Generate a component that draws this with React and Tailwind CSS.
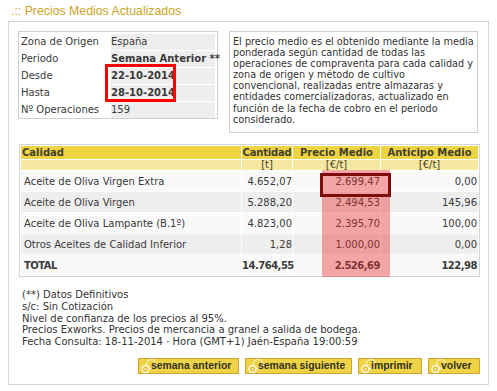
import React from "react";

const info = [
  ["Zona de Origen", "España", false],
  ["Periodo", "Semana Anterior **", true],
  ["Desde", "22-10-2014", true],
  ["Hasta", "28-10-2014", true],
  ["Nº Operaciones", "159", false],
];

const rows = [
  ["Aceite de Oliva Virgen Extra", "4.652,07", "2.699,47", "0,00"],
  ["Aceite de Oliva Virgen", "5.288,20", "2.494,53", "145,96"],
  ["Aceite de Oliva Lampante (B.1º)", "4.823,00", "2.395,70", "100,00"],
  ["Otros Aceites de Calidad Inferior", "1,28", "1.000,00", "0,00"],
];

const desc = [
  "El precio medio es el obtenido mediante la media",
  "ponderada según cantidad de todas las",
  "operaciones de compraventa para cada calidad y",
  "zona de origen y método de cultivo",
  "convencional, realizadas entre almazaras y",
  "entidades comercializadoras, actualizado en",
  "función de la fecha de cobro en el periodo",
  "considerado.",
];

function Btn({ label, w }) {
  return (
    <div
      className={`relative h-[16px] ${w} border border-[#cfa432] bg-[#efd346] flex items-center`}
    >
      <svg className="absolute left-0 top-0" width="20" height="16" viewBox="0 0 20 16">
        <circle cx="12" cy="5" r="4.5" fill="none" stroke="rgba(255,255,255,0.55)" strokeWidth="1.4" />
        <circle cx="6.5" cy="10" r="3.5" fill="#e6c53a" stroke="rgba(255,255,255,0.9)" strokeWidth="1.4" />
        <circle cx="6.5" cy="10" r="1.2" fill="rgba(255,255,255,0.6)" />
      </svg>
      <span className="relative pl-[12px] text-[10.4px] font-bold font-['Liberation_Sans',sans-serif] text-[#33321f] leading-[14px] whitespace-nowrap">
        {label}
      </span>
    </div>
  );
}

export default function App() {
  return (
    <div className="relative w-[497px] h-[391px] bg-white overflow-hidden font-['DejaVu_Sans',sans-serif] text-[10px] text-[#3a3a3a]">
      <div className="h-[21px] pl-[11px] pt-[4px] leading-[14px] text-[12.3px] text-[#c9a328] font-['Liberation_Sans',sans-serif]">
        .:: Precios Medios Actualizados
      </div>
      <div className="ml-[8px] w-[481px] h-[364px] border border-[#d6d6d6] pl-[9px] pt-[9px]">
        <div className="flex items-start gap-[11px]">
          <div className="w-[200px] border border-[#d0d0d0] pl-[2px] pt-[2px]">
            <div className="grid grid-cols-[89px_104px] gap-x-[1px] gap-y-[1px]">
              {info.map(([l, v, b]) => (
                <React.Fragment key={l}>
                  <div className="h-[16px] leading-[16px] whitespace-nowrap">{l}</div>
                  <div
                    className={`h-[16px] leading-[16px] bg-[#eeeeee] whitespace-nowrap ${b ? "font-bold" : ""}`}
                  >
                    {v}
                  </div>
                </React.Fragment>
              ))}
            </div>
          </div>
          <div className="w-[249px] h-[102px] border border-[#d0d0d0] pl-[3px] pt-[4px] text-[9.7px] leading-[11.1px] text-[#333]">
            {desc.map((d) => (
              <div key={d} className="whitespace-nowrap">
                {d}
              </div>
            ))}
          </div>
        </div>

        <div className="ml-[1px] mt-[11px] w-[461px] border border-[#d4d4d4]">
          <table className="table-fixed border-separate border-spacing-[1px] w-[459px]">
            <colgroup>
              <col className="w-[220px]" />
              <col className="w-[50px]" />
              <col className="w-[87px]" />
              <col className="w-[97px]" />
            </colgroup>
            <thead>
              <tr className="bg-[#eed342] h-[13px] font-bold text-[#443f2a]">
                <th className="text-left pl-[1px] leading-[13px] font-bold">Calidad</th>
                <th className="text-center leading-[13px] font-bold whitespace-nowrap tracking-[-0.2px]">Cantidad</th>
                <th className="text-center leading-[13px] font-bold whitespace-nowrap">Precio Medio</th>
                <th className="text-center leading-[13px] font-bold whitespace-nowrap">Anticipo Medio</th>
              </tr>
              <tr className="bg-[#f6e8a0] h-[10px] text-[#443f2a]">
                <th className="leading-[10px]"></th>
                <th className="leading-[10px] font-normal">[t]</th>
                <th className="leading-[10px] font-normal">[€/t]</th>
                <th className="leading-[10px] font-normal">[€/t]</th>
              </tr>
            </thead>
            <tbody>
              {rows.map((r, i) => (
                <tr key={r[0]} className={`h-[20px] ${i % 2 === 0 ? "bg-[#f9f9f9]" : "bg-[#eeeeee]"}`}>
                  <td className="pl-[3px] whitespace-nowrap">{r[0]}</td>
                  <td className="text-right whitespace-nowrap">{r[1]}</td>
                  <td className="text-right whitespace-nowrap">{r[2]}</td>
                  <td className="text-right pr-[1px] whitespace-nowrap">{r[3]}</td>
                </tr>
              ))}
              <tr className="h-[20px] bg-[#f9f9f9] font-bold tracking-[-0.5px]">
                <td className="pl-[3px]">TOTAL</td>
                <td className="text-right whitespace-nowrap">14.764,55</td>
                <td className="text-right whitespace-nowrap">2.526,69</td>
                <td className="text-right pr-[1px] whitespace-nowrap">122,98</td>
              </tr>
            </tbody>
          </table>
        </div>

        <div className="mt-[12px] pl-[4px] leading-[11.8px] text-[#333]">
          <div>(**) Datos Definitivos</div>
          <div>s/c: Sin Cotización</div>
          <div>Nivel de confianza de los precios al 95%.</div>
          <div>Precios Exworks. Precios de mercancia a granel a salida de bodega.</div>
          <div>Fecha Consulta: 18-11-2014 · Hora (GMT+1) Jaén-España 19:00:59</div>
        </div>

        <div className="mt-[10px] w-[462px] flex justify-end gap-[6px]">
          <Btn label="semana anterior" w="w-[101px]" />
          <Btn label="semana siguiente" w="w-[107px]" />
          <Btn label="imprimir" w="w-[64px]" />
          <Btn label="volver" w="w-[52px]" />
        </div>
      </div>

      {/* annotation overlays */}
      <div className="absolute left-[105px] top-[64px] w-[71px] h-[38px] border-[3px] border-[#ff0000]" />
      <div className="absolute left-[322px] top-[170px] w-[68px] h-[107px] bg-[rgba(236,40,40,0.4)]" />
      <div className="absolute left-[320px] top-[173px] w-[71px] h-[24px] border-[3px] border-[#7e0c0c]" />
    </div>
  );
}
